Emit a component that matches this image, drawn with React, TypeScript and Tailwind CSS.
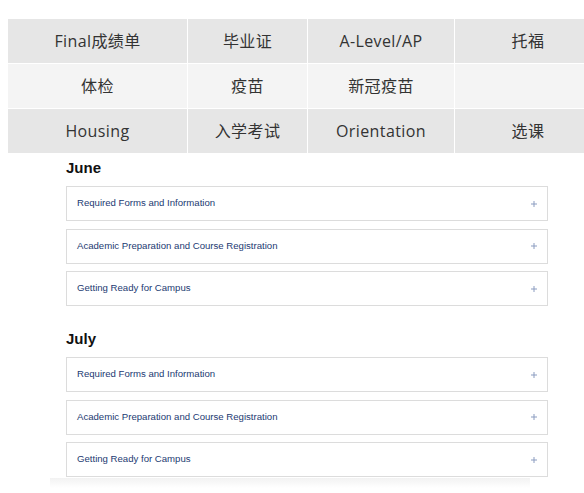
import React from 'react'

const cells: { label: string; tone: 'dark' | 'light' }[][] = [
  [
    { label: 'Final成绩单', tone: 'dark' },
    { label: '毕业证', tone: 'dark' },
    { label: 'A-Level/AP', tone: 'dark' },
    { label: '托福', tone: 'dark' },
  ],
  [
    { label: '体检', tone: 'light' },
    { label: '疫苗', tone: 'light' },
    { label: '新冠疫苗', tone: 'light' },
    { label: '', tone: 'light' },
  ],
  [
    { label: 'Housing', tone: 'dark' },
    { label: '入学考试', tone: 'dark' },
    { label: 'Orientation', tone: 'dark' },
    { label: '选课', tone: 'dark' },
  ],
]

const items = [
  'Required Forms and Information',
  'Academic Preparation and Course Registration',
  'Getting Ready for Campus',
]

function Plus() {
  return (
    <svg width="6" height="6" viewBox="0 0 6 6" className="shrink-0">
      <path d="M3 0v6M0 3h6" stroke="#8b9cc0" strokeWidth="1" />
    </svg>
  )
}

function Month({ name, first }: { name: string; first?: boolean }) {
  return (
    <div className={first ? 'mt-[5px]' : 'mt-[23px]'}>
      <h3 className="text-[15px] leading-[20px] font-bold text-[#111] mb-[8px] font-['Liberation_Sans',Arial,sans-serif]">
        {name}
      </h3>
      <div className="flex flex-col gap-[7.5px]">
        {items.map(t => (
          <div
            key={t}
            className="h-[35px] border border-[#dcdcdc] bg-white flex items-center justify-between pl-[10px] pr-[10px]"
          >
            <span className="text-[9.6px] text-[#1c3a72] font-['Liberation_Sans',Arial,sans-serif]">{t}</span>
            <Plus />
          </div>
        ))}
      </div>
    </div>
  )
}

export default function App() {
  return (
    <div className="w-[584px] h-[493px] overflow-hidden bg-white">
      {/* top grid of links */}
      <div className="pt-[19px] pl-[8px]">
        <div className="grid grid-cols-[179px_119px_146px_146px] gap-px bg-white w-[593px]">
          {cells.flat().map((c, i) => (
            <div
              key={i}
              className={`h-[44px] flex items-center justify-center text-[16px] tracking-[0.4px] text-[#333] font-['Open_Sans','Noto_Sans_CJK_SC',sans-serif] ${
                c.tone === 'dark' ? 'bg-[#e6e6e6]' : 'bg-[#f4f4f4]'
              }`}
            >
              {c.label}
            </div>
          ))}
        </div>
      </div>

      {/* months */}
      <div className="ml-[66px] w-[482px]">
        <Month name="June" first />
        <Month name="July" />
      </div>
      <div className="ml-[50px] w-[480px] h-[10px] mt-[1px] bg-gradient-to-b from-[#f2f2f2] to-white" />
    </div>
  )
}
